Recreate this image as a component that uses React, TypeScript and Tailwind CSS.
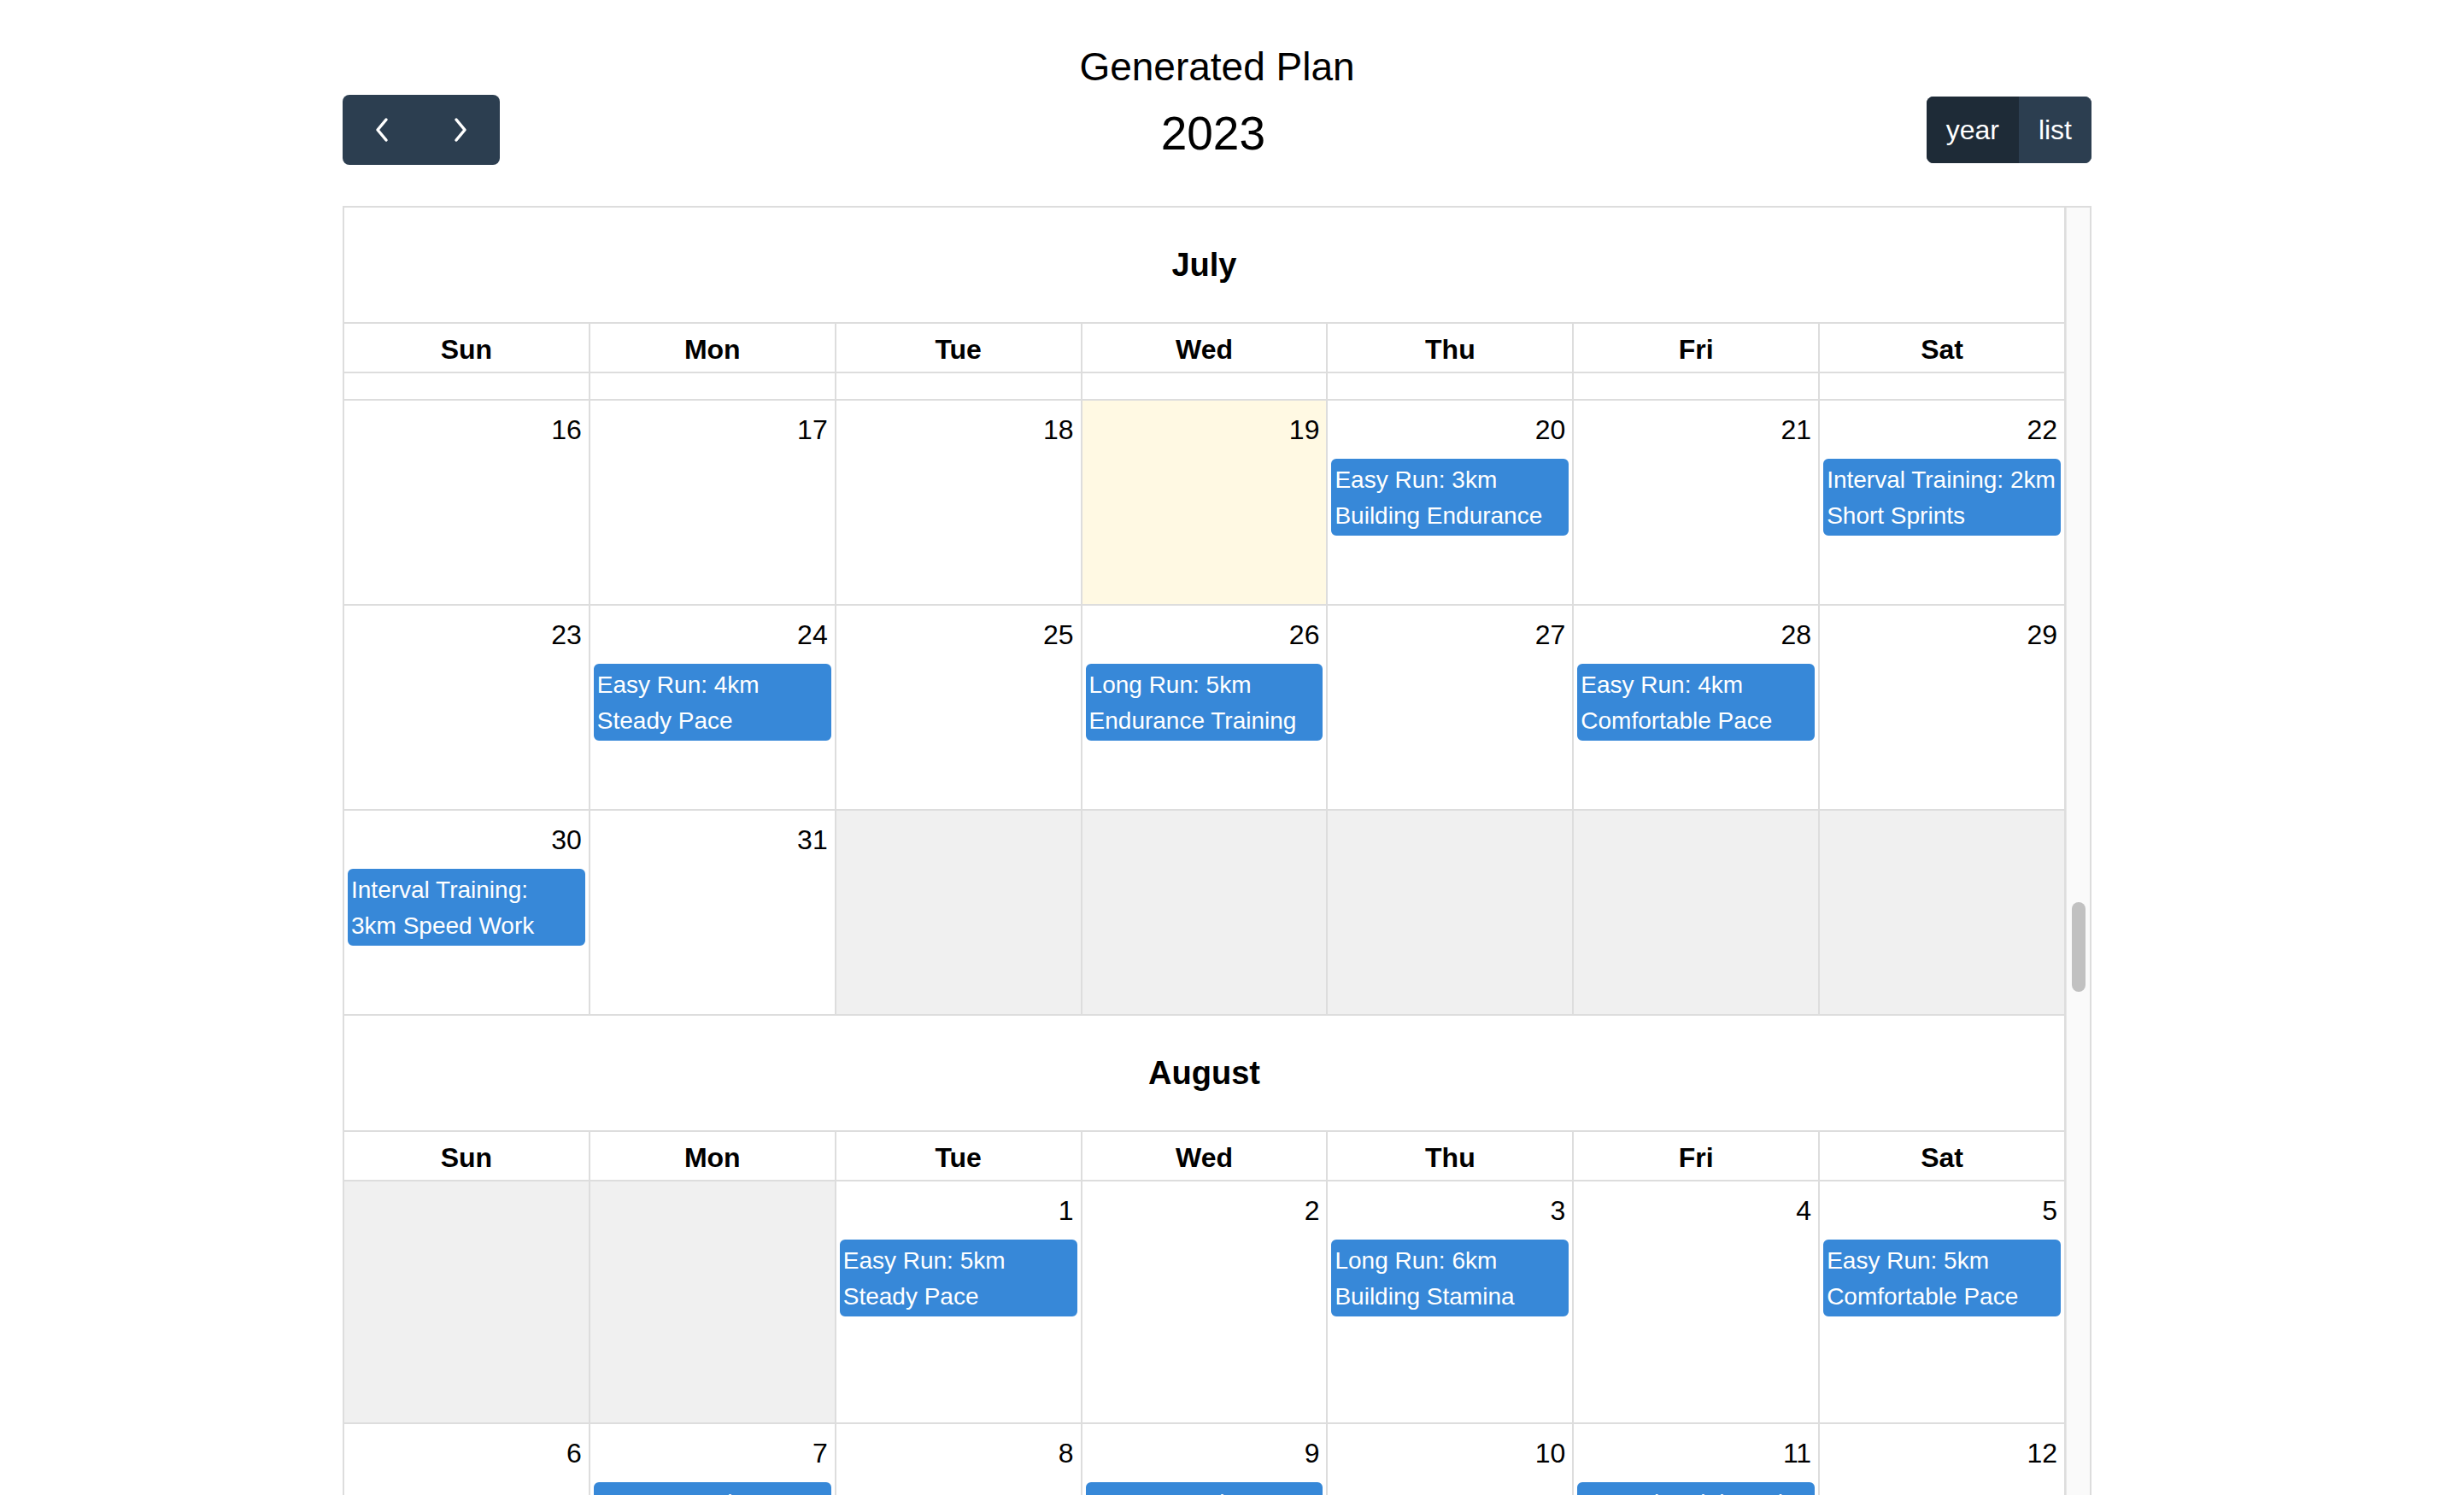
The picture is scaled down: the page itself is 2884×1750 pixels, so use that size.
import React from 'react';

type Cell = { day?: number; today?: boolean; off?: boolean; ev?: string[] };

const DAYS = ['Sun', 'Mon', 'Tue', 'Wed', 'Thu', 'Fri', 'Sat'];

const july: Cell[][] = [
  [
    { day: 16 }, { day: 17 }, { day: 18 }, { day: 19, today: true },
    { day: 20, ev: ['Easy Run: 3km', 'Building Endurance'] },
    { day: 21 },
    { day: 22, ev: ['Interval Training: 2km', 'Short Sprints'] },
  ],
  [
    { day: 23 },
    { day: 24, ev: ['Easy Run: 4km', 'Steady Pace'] },
    { day: 25 },
    { day: 26, ev: ['Long Run: 5km', 'Endurance Training'] },
    { day: 27 },
    { day: 28, ev: ['Easy Run: 4km', 'Comfortable Pace'] },
    { day: 29 },
  ],
  [
    { day: 30, ev: ['Interval Training:', '3km Speed Work'] },
    { day: 31 },
    { off: true }, { off: true }, { off: true }, { off: true }, { off: true },
  ],
];

const august: Cell[][] = [
  [
    { off: true }, { off: true },
    { day: 1, ev: ['Easy Run: 5km', 'Steady Pace'] },
    { day: 2 },
    { day: 3, ev: ['Long Run: 6km', 'Building Stamina'] },
    { day: 4 },
    { day: 5, ev: ['Easy Run: 5km', 'Comfortable Pace'] },
  ],
  [
    { day: 6 },
    { day: 7, ev: ['Easy Run: 4km', 'Steady Pace'] },
    { day: 8 },
    { day: 9, ev: ['Long Run: 7km', 'Endurance Training'] },
    { day: 10 },
    { day: 11, ev: ['Interval Training: 3km', 'Speed Work'] },
    { day: 12 },
  ],
];

const Chevron = ({ dir }: { dir: 'left' | 'right' }) => (
  <svg width="18" height="30" viewBox="0 0 18 30" fill="none">
    <path
      d={dir === 'left' ? 'M14 3 L4 15 L14 27' : 'M4 3 L14 15 L4 27'}
      stroke="white" strokeWidth="3.5" strokeLinecap="round" strokeLinejoin="round"
    />
  </svg>
);

const Event = ({ lines }: { lines: string[] }) => (
  <div className="mx-[4px] mt-[10px] rounded-[6px] border-2 border-[#3788d8] bg-[#3788d8] px-[2px] pt-[2px] text-[28px] leading-[42px] text-white">
    {lines.map((l) => (
      <div key={l} className="whitespace-nowrap overflow-hidden">{l}</div>
    ))}
  </div>
);

const DayCell = ({ cell }: { cell: Cell }) => {
  let bg = 'bg-white';
  if (cell.off) bg = 'bg-[#f0f0f0]';
  if (cell.today) bg = 'bg-[#fff9e3]';
  return (
    <div className={`border-r-2 border-b-2 border-[#dddddd] overflow-hidden ${bg}`}>
      {cell.day && (
        <div className="h-[58px] pt-[10px] pr-[8px] text-right text-[32px] leading-[48px] text-black">{cell.day}</div>
      )}
      {cell.ev && <Event lines={cell.ev} />}
    </div>
  );
};

const Month = ({ name, weeks, rowH, partial = false }: any) => (
  <div>
    <div className="h-[136px] flex items-center justify-center border-r-2 border-b-2 border-[#dddddd] text-[38px] font-bold text-black">
      {name}
    </div>
    <div className="grid grid-cols-7 h-[58px]">
      {DAYS.map((d) => (
        <div key={d} className="border-r-2 border-b-2 border-[#dddddd] pt-[6px] text-center text-[32px] font-bold leading-[48px] text-black">
          {d}
        </div>
      ))}
    </div>
    {partial && (
      <div className="grid grid-cols-7 h-[32px]">
        {DAYS.map((d) => (
          <div key={d} className="border-r-2 border-b-2 border-[#dddddd] bg-white" />
        ))}
      </div>
    )}
    {weeks.map((w: Cell[], i: number) => (
      <div key={i} className={`grid grid-cols-7 ${rowH}`}>
        {w.map((c, j) => <DayCell key={j} cell={c} />)}
      </div>
    ))}
  </div>
);

export default function App() {
  return (
    <div className="h-[1750px] overflow-hidden bg-white font-['Liberation_Sans',Arial,sans-serif] text-black">
      <div className="ml-[401px] w-[2047px] pt-[49px]">
        <div className="h-[62px] text-center text-[46px] leading-[59px]">Generated Plan</div>

        <div className="mb-[48px] flex h-[82px] items-center justify-between">
          <div className="flex h-[82px] w-[184px] overflow-hidden rounded-[8px] bg-[#2c3e50]">
            <button className="flex flex-1 items-center justify-center"><Chevron dir="left" /></button>
            <button className="flex flex-1 items-center justify-center"><Chevron dir="right" /></button>
          </div>
          <h2 className="pt-[8px] text-[55px] leading-none">2023</h2>
          <div className="flex h-[78px] overflow-hidden rounded-[8px] text-[32px] leading-[48px] text-white">
            <button className="border-2 border-[#1e2b37] bg-[#1e2b37] px-[21px]">year</button>
            <button className="border-2 border-[#2c3e50] bg-[#2c3e50] px-[21px]">list</button>
          </div>
        </div>

        <div className="flex border-2 border-[#dddddd]">
          <div className="flex-1">
            <Month name="July" weeks={july} rowH="h-[240px]" partial />
            <Month name="August" weeks={august} rowH="h-[284px]" />
          </div>
          <div className="w-[28px] border-l border-[#e8e8e8] bg-[#fafafa]">
            <div className="mx-auto mt-[813px] h-[105px] w-[16px] rounded-full bg-[#c1c1c1]" />
          </div>
        </div>
      </div>
    </div>
  );
}
